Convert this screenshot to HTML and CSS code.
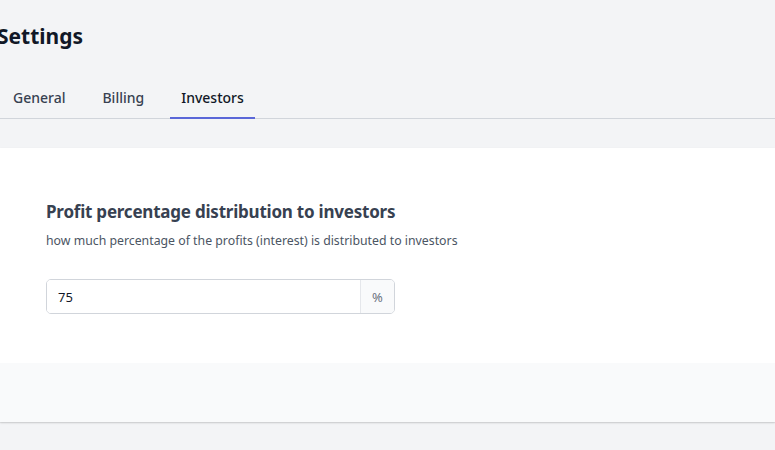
FILE: index.html
```html
<!DOCTYPE html>
<html lang="en">
<head>
<meta charset="utf-8">
<title>Settings</title>
<link rel="stylesheet" href="styles.css">
</head>
<body>
<div class="page">
  <header class="page-header">
    <h1 class="page-title">Settings</h1>
    <nav class="tabs">
      <a class="tab">General</a>
      <a class="tab">Billing</a>
      <a class="tab tab-active">Investors</a>
    </nav>
  </header>
  <section class="card">
    <div class="card-body">
      <h2 class="card-title">Profit percentage distribution to investors</h2>
      <p class="card-desc">how much percentage of the profits (interest) is distributed to investors</p>
      <div class="input-group">
        <input class="input" type="text" value="75">
        <span class="input-suffix">%</span>
      </div>
    </div>
    <div class="card-footer"></div>
  </section>
</div>
</body>
</html>
```
FILE: styles.css
```css
* { box-sizing: border-box; }
html, body { margin: 0; padding: 0; }
body {
  background: #f3f4f6;
  font-family: "Noto Sans", "Open Sans", sans-serif;
  color: #111827;
  height: 450px;
  overflow: hidden;
}
.page-header {
  padding-top: 20px;
}
.page-title {
  margin: 0 0 0 -3px;
  font-size: 21px;
  line-height: 32px;
  font-weight: 700;
  color: #111827;
}
.tabs {
  display: flex;
  gap: 15px;
  padding-left: 2px;
  margin-top: 30px;
  border-bottom: 1px solid #d1d5db;
}
.tab {
  display: block;
  padding: 0 11px;
  height: 37px;
  line-height: 31px;
  font-size: 14px;
  font-weight: 500;
  color: #374151;
  border-bottom: 2px solid transparent;
  margin-bottom: -1px;
}
.tab-active {
  color: #111827;
  border-bottom-color: #5a67d8;
}
.card {
  margin-top: 29px;
  background: #fff;
  box-shadow: 0 1px 2px rgba(0,0,0,0.12), 0 1px 1px rgba(0,0,0,0.06);
}
.card-body {
  padding: 52px 46px 49px;
}
.card-title {
  margin: 0;
  font-size: 17px;
  line-height: 24px;
  font-weight: 700;
  letter-spacing: -0.22px;
  color: #374151;
}
.card-desc {
  margin: 8px 0 0;
  font-size: 12.3px;
  line-height: 18px;
  color: #4b5563;
}
.input-group {
  display: flex;
  width: 349px;
  height: 35px;
  margin-top: 29px;
  border: 1px solid #d1d5db;
  border-radius: 5px;
  overflow: hidden;
}
.input {
  flex: 1;
  min-width: 0;
  border: 0;
  outline: 0;
  padding: 0 11px;
  font: inherit;
  font-size: 13px;
  color: #111827;
  background: #fff;
}
.input-suffix {
  width: 34px;
  display: flex;
  align-items: center;
  justify-content: center;
  border-left: 1px solid #e5e7eb;
  background: #f9fafb;
  font-size: 13px;
  color: #6b7280;
}
.card-footer {
  height: 59px;
  background: #f9fafb;
}
```
